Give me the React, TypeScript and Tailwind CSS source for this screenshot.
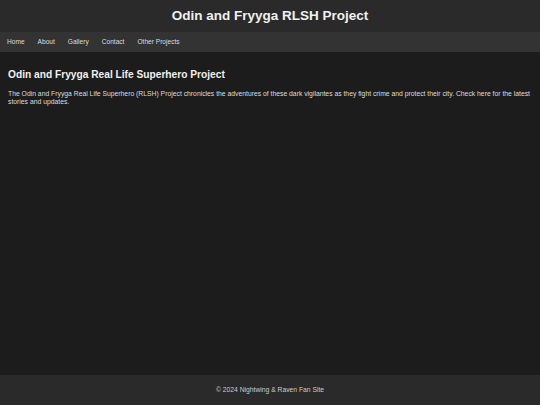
export default function App() {
  const links = ["Home", "About", "Gallery", "Contact", "Other Projects"];
  return (
    <div className="flex h-[405px] w-[540px] flex-col bg-[#1c1c1c] font-['Liberation_Sans',Arial,sans-serif] text-[#e0e0e0]">
      <header className="flex h-[32px] items-center justify-center bg-[#2a2a2a]">
        <h1 className="text-[13.5px] font-bold text-[#f0f0f0]">Odin and Fryyga RLSH Project</h1>
      </header>
      <nav className="flex h-[20px] items-center gap-[13px] bg-[#333333] px-[7px] text-[6.6px] text-[#dddddd]">
        {links.map((l) => (
          <a key={l} href="#" className="text-[#dddddd] no-underline">
            {l}
          </a>
        ))}
      </nav>
      <main className="flex-1 px-[8px] pt-[17px]">
        <h2 className="text-[10.2px] font-bold leading-[12px] text-[#f0f0f0]">
          Odin and Fryyga Real Life Superhero Project
        </h2>
        <p className="mt-[9px] text-[6.8px] leading-[7.5px] text-[#dddddd]">
          The Odin and Fryyga Real Life Superhero (RLSH) Project chronicles the adventures of these dark
          vigilantes as they fight crime and protect their city. Check here for the latest stories and updates.
        </p>
      </main>
      <footer className="flex h-[30px] items-center justify-center bg-[#2a2a2a] text-[6.75px] text-[#cccccc]">
        © 2024 Nightwing &amp; Raven Fan Site
      </footer>
    </div>
  );
}
